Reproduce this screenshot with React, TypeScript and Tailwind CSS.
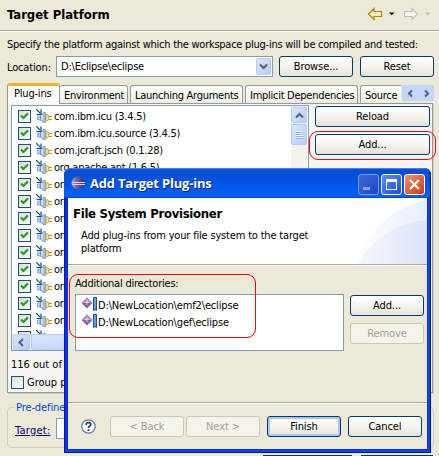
import React from "react";
import clsx from "clsx";

type ButtonProps = { label: string; className?: string; disabled?: boolean; primary?: boolean };

function Button({ label, className, disabled, primary }: ButtonProps) {
  return (
    <button
      className={clsx(
        "flex h-[21px] shrink-0 items-center justify-center rounded-[3px] border leading-[13px] tracking-[-0.1px]",
        disabled
          ? "border-[#c9c7ba] bg-[#f5f4ea] text-[#a1a192]"
          : "border-[#003c74] bg-linear-to-b from-white via-[#f5f4ef] to-[#e6e3d8] text-black",
        primary && "shadow-[inset_0_0_0_2px_#a9c4f2]",
        className,
      )}
    >
      {label}
    </button>
  );
}

function Chevron({ d, className }: { d: string; className?: string }) {
  return (
    <svg viewBox="0 0 9 9" className={clsx("size-[9px]", className)} fill="none" stroke="#4d6185" strokeWidth="2">
      <path d={d} />
    </svg>
  );
}

const blueBox = "flex shrink-0 items-center justify-center rounded-[2px] border border-[#b7cbf8] bg-linear-to-br from-[#dbe6fe] to-[#b9cdf8]";

function CheckBox({ checked }: { checked?: boolean }) {
  return (
    <span className="flex size-[13px] shrink-0 items-center justify-center border border-[#1c5180] bg-linear-to-br from-[#dcdcd7] to-white">
      {checked && (
        <svg viewBox="0 0 9 9" className="size-[9px]" fill="none" stroke="#21a121" strokeWidth="2.2">
          <path d="M1 3.5 3.4 6 8 1.4" />
        </svg>
      )}
    </span>
  );
}

function PluginIcon() {
  return (
    <svg viewBox="0 0 16 14" className="h-[14px] w-[16px] shrink-0">
      <path d="M1.5 7h3v4h-3z" fill="#b4c9ec" stroke="#7f9bcb" strokeWidth=".7" />
      <path d="M4.5 5.5 6.5 4.5 7.5 3.5h1.8v10.5H7.5L6.5 12.5 4.5 11.5z" fill="#a3bfee" stroke="#6484ba" strokeWidth=".7" />
      <path d="M6 6v5.5" stroke="#dbe8fc" strokeWidth="1.4" />
      <path d="M9.8 5.8h1.6l1.4 1v4l-1.4 1H9.8z" fill="#f8df98" stroke="#c8912c" strokeWidth=".9" />
      <path d="M13 7.5h3M13 10.5h3" stroke="#c8912c" strokeWidth="1" />
      <path d="M0 0 4 4M5 .5v5H.5" fill="none" stroke="#174a78" strokeWidth="1.2" />
    </svg>
  );
}

function Tab({ label, className }: { label: string; className?: string }) {
  return (
    <div
      className={clsx(
        "flex h-[18px] shrink-0 items-start overflow-hidden rounded-t-[3px] border border-b-0 border-[#919b9c] bg-linear-to-b from-white to-[#efede2] pt-[3px] tracking-[-0.27px] whitespace-nowrap",
        className,
      )}
    >
      {label}
    </div>
  );
}

const plugins: string[] = [
  "com.ibm.icu (3.4.5)",
  "com.ibm.icu.source (3.4.5)",
  "com.jcraft.jsch (0.1.28)",
  "org.apache.ant (1.6.5)",
  ...Array.from({ length: 10 }, () => "org"),
];

function Header() {
  return (
    <header className="flex h-[32px] shrink-0 justify-between border-b border-white shadow-[inset_0_-1px_0_#aca899]">
      <h1 className="mt-[7px] ml-[7px] text-[13px] leading-[15px] font-bold tracking-[-0.03px]">Target Platform</h1>
      <svg viewBox="0 0 66 14" className="mt-[7px] mr-[6px] h-[14px] w-[66px]">
        <path d="M1.5 7 7 1.5V4.5H14.5V9.5H7V12.5z" fill="#fdefb5" stroke="#b97e11" strokeWidth="1.2" />
        <path d="M22 5.5h5.5L24.8 8.3z" fill="#000" />
        <path d="M50.5 7 45 1.5V4.5H37.5V9.5H45V12.5z" fill="#f4f3ee" stroke="#c0bfba" strokeWidth="1.1" />
        <path d="M58 5.5h5.5L60.8 8.3z" fill="#bdbbb0" />
      </svg>
    </header>
  );
}

function PluginList() {
  return (
    <div className="flex h-[246px] w-[298px] flex-col border border-[#7f9db9] bg-white">
      <div className="flex h-[228px] overflow-hidden">
        <ul className="flex-1 pt-[2px] pl-[6px]">
          {plugins.map((name, i) => (
            <li key={i} className="flex h-[17px] items-center">
              <CheckBox checked />
              <span className="mb-px ml-[5px] flex">
                <PluginIcon />
              </span>
              <span className="ml-[2px] tracking-[-0.25px] whitespace-nowrap">{name}</span>
            </li>
          ))}
        </ul>
        <div className="mr-px flex w-[16px] flex-col gap-px bg-[#f3f2ec] pt-px">
          <div className={clsx(blueBox, "h-[16px]")}>
            <Chevron d="M1 6.5 4.5 3 8 6.5" />
          </div>
          <div className={clsx(blueBox, "h-[21px] flex-col")}>
            <i className="h-px w-[7px] bg-white" />
            <i className="h-px w-[7px] bg-[#8cb0f8]" />
            <i className="h-px w-[7px] bg-white" />
            <i className="h-px w-[7px] bg-[#8cb0f8]" />
            <i className="h-px w-[7px] bg-white" />
            <i className="h-px w-[7px] bg-[#8cb0f8]" />
            <i className="h-px w-[7px] bg-white" />
            <i className="h-px w-[7px] bg-[#8cb0f8]" />
          </div>
        </div>
      </div>
      <div className="flex h-[16px] gap-px bg-[#f3f2ec]">
        <div className={clsx(blueBox, "ml-px w-[17px]")}>
          <Chevron d="M6 1 2.5 4.5 6 8" />
        </div>
        <div className={clsx(blueBox, "w-[160px]")} />
      </div>
    </div>
  );
}

function TargetPage() {
  return (
    <main className="flex h-[456px] w-[439px] flex-col">
      <Header />
      <p className="mt-[6px] ml-[7px] h-[13px] tracking-[-0.26px] whitespace-nowrap">
        Specify the platform against which the workspace plug-ins will be compiled and tested:
      </p>
      <div className="mt-[5px] flex h-[21px] pl-[7px]">
        <label className="w-[49px] pt-[5px] tracking-[-0.15px]">Location:</label>
        <div className="flex w-[217px] items-center justify-between border border-[#7f9db9] bg-white pr-px pl-[4px]">
          <span className="tracking-[-0.22px]">D:\Eclipse\eclipse</span>
          <span className={clsx(blueBox, "h-[17px] w-[15px]")}>
            <Chevron d="M1 2.5 4.5 6 8 2.5" />
          </span>
        </div>
        <Button label="Browse..." className="ml-[6px] w-[74px]" />
        <Button label="Reset" className="ml-[7px] w-[74px]" />
      </div>
      <nav className="mt-[6px] flex h-[20px] items-end pl-[7px]">
        <div className="z-1 -mb-px h-[21px] w-[53px] shrink-0 rounded-t-[3px] border-x border-t-3 border-x-[#919b9c] border-t-[#f5b12e] bg-[#fcfcfb] pt-[1px] pl-[6px] tracking-[-0.2px]">
          Plug-ins
        </div>
        <Tab label="Environment" className="w-[68px] border-l-0 pl-[4px]" />
        <Tab label="Launching Arguments" className="ml-[2px] w-[113px] pl-[4px]" />
        <Tab label="Implicit Dependencies" className="ml-[2px] w-[113px] pl-[4px]" />
        <Tab label="Source" className="ml-[2px] w-[41px] rounded-r-none border-r-0 pl-[4px]" />
        <div className="mb-[2px] ml-px flex h-[16px] w-[32px] items-center justify-around bg-[#c6d5fb]">
          <Chevron d="M6 1.5 3 4.5 6 7.5" />
          <Chevron d="M3 1.5 6 4.5 3 7.5" />
        </div>
      </nav>
      <section className="ml-[7px] flex h-[290px] w-[426px] flex-col border border-[#919b9c] bg-[#f6f5f2] pt-px pl-[3px] shadow-[1px_1px_0_#d0cec0]">
        <div className="flex">
          <PluginList />
          <div className="flex flex-col gap-[7px] pt-px pl-[6px]">
            <Button label="Reload" className="w-[115px]" />
            <Button label="Add..." className="w-[115px]" />
          </div>
        </div>
        <p className="mt-[7px]">116 out of</p>
        <div className="mt-[5px] flex items-center gap-[3px]">
          <CheckBox />
          <span>Group plug-ins</span>
        </div>
      </section>
      <fieldset className="mt-[8px] ml-[7px] h-[47px] w-[427px] rounded-[4px] border border-[#d0d0bf] pl-[7px]">
        <legend className="px-px tracking-[-0.1px] text-[#0046d5]">Pre-defined</legend>
        <div className="mt-[4px] flex">
          <span className="w-[41px] pt-[6px] tracking-[0.25px] text-[#000080] underline">Target:</span>
          <span className="h-[21px] w-[200px] border border-[#7f9db9] bg-white" />
        </div>
      </fieldset>
      <div className="mt-[7px] flex h-px gap-[9px] pl-[263px]">
        <span className="w-[89px] bg-[#003c74]" />
        <span className="w-[72px] bg-[#003c74]" />
      </div>
    </main>
  );
}

function EclipseLogo() {
  return (
    <svg viewBox="0 0 14 14" className="size-[14px]">
      <defs>
        <linearGradient id="ball" x1="0" y1="0" x2="1" y2="0">
          <stop offset="0" stopColor="#b9a3c9" />
          <stop offset=".45" stopColor="#6a5b9c" />
          <stop offset="1" stopColor="#35307a" />
        </linearGradient>
      </defs>
      <circle cx="7" cy="7" r="6.5" fill="url(#ball)" />
      <path d="M1 6.5h13M1 8.5h13" stroke="#dcd6ec" strokeWidth="1" />
    </svg>
  );
}

const frameButton = "flex h-[21px] w-[21px] items-center justify-center rounded-[3px] border";

function DirectoryIcon() {
  return (
    <svg viewBox="0 0 16 15" className="h-[15px] w-[16px] shrink-0">
      <path d="M5 .5 10.5 6 5 11.5-.5 6z" fill="#8a63a6" />
      <path d="M5 .5 10.5 6H-.5z" fill="#b092c6" />
      <path d="M5 3v5M3 5.5h4" stroke="#e2d3ee" strokeWidth="1" />
      <path d="M11.5.5h3v13l-1.5-1-1.5 1z" fill="#5fa3dc" stroke="#1c4f8c" />
    </svg>
  );
}

function Dialog() {
  return (
    <div className="absolute top-[168px] left-[64px] flex h-[285px] w-[367px] flex-col rounded-t-[7px] bg-[#0831d9] px-[4px] pb-[4px] shadow-[inset_-1px_-1px_0_#00138c,inset_1px_0_0_#0019cf,inset_-3px_-3px_0_#0a48e8]">
      <div className="-mx-[4px] flex h-[30px] shrink-0 items-center rounded-t-[7px] bg-linear-to-b from-[#0a4bd0] via-[#0054e6] to-[#0263f8] pr-[6px] pl-[7px] shadow-[inset_0_2px_1px_-1px_#3d8df8,inset_-1px_0_0_#00138c,inset_0_-1px_0_#0348c6]">
        <EclipseLogo />
        <span className="ml-[5px] flex-1 font-['Open_Sans',sans-serif] text-[13px] leading-[18px] font-bold tracking-[-0.2px] whitespace-nowrap text-white [font-stretch:normal] [text-shadow:1px_1px_0_#0a1f80]">
          Add Target Plug-ins
        </span>
        <div className="mt-[3px] flex gap-[2px]">
          <span className={clsx(frameButton, "border-[#7f97e8] bg-linear-to-br from-[#3f68dd] to-[#1c48c6]")}>
            <i className="mt-[8px] mr-[4px] h-[3px] w-[7px] bg-[#8fa0e6]" />
          </span>
          <span className={clsx(frameButton, "border-white bg-linear-to-br from-[#5b8af5] to-[#1c50dc]")}>
            <i className="h-[11px] w-[11px] border border-t-3 border-white" />
          </span>
          <span className={clsx(frameButton, "border-white bg-linear-to-br from-[#f0906f] to-[#cc3411]")}>
            <svg viewBox="0 0 11 11" className="size-[11px]" stroke="#fff" strokeWidth="2.2">
              <path d="M1 1 10 10M10 1 1 10" />
            </svg>
          </span>
        </div>
      </div>
      <div className="relative h-[67px] shrink-0 overflow-hidden border-b border-[#aca899] bg-white pt-[8px] pl-[5px]">
        <svg viewBox="0 0 80 66" className="absolute top-0 right-0 h-[66px] w-[80px]">
          <defs>
            <linearGradient id="outer" x1="0" y1="0" x2="1" y2="0">
              <stop offset="0" stopColor="#fff" />
              <stop offset="1" stopColor="#e8eefa" />
            </linearGradient>
            <linearGradient id="inner" x1="0" y1="0" x2="1" y2="0">
              <stop offset="0" stopColor="#f6f8fd" />
              <stop offset="1" stopColor="#dbe4f7" />
            </linearGradient>
          </defs>
          <path d="M8 66C20 35 45 8 80 2V66z" fill="url(#outer)" />
          <path d="M10 66C25 42 50 24 80 22V66z" fill="url(#inner)" />
        </svg>
        <h2 className="relative text-[13px] leading-[15px] font-bold tracking-[-0.3px]">File System Provisioner</h2>
        <p className="relative mt-[8px] ml-[8px] w-[250px] tracking-[-0.18px]">
          Add plug-ins from your file system to the target
          <br />
          platform
        </p>
      </div>
      <div className="flex flex-1 flex-col border-t border-white bg-[#ece9d8]">
        <p className="mt-[11px] ml-[7px] tracking-[-0.22px]">Additional directories:</p>
        <div className="mt-[4px] flex pl-[7px]">
          <ul className="h-[57px] w-[269px] border border-[#7f9db9] bg-white pt-[2px] pl-[6px] tracking-[-0.15px]">
            {["D:\\NewLocation\\emf2\\eclipse", "D:\\NewLocation\\gef\\eclipse"].map((dir) => (
              <li key={dir} className="flex h-[17px]">
                <DirectoryIcon />
                <span className="pt-[2px]">{dir}</span>
              </li>
            ))}
          </ul>
          <div className="ml-[6px] flex flex-col gap-[7px] pt-px">
            <Button label="Add..." className="w-[74px]" />
            <Button label="Remove" disabled className="w-[74px]" />
          </div>
        </div>
        <div className="mt-auto flex h-[47px] border-t border-[#aca899] pt-[13px] pl-[13px] shadow-[inset_0_1px_0_#fff]">
          <svg viewBox="0 0 15 15" className="mt-[3px] size-[15px]">
            <circle cx="7.5" cy="7.5" r="6.7" fill="#fbfcff" stroke="#65779f" strokeWidth="1.2" />
            <path d="M5.2 6V5.2C5.2 3 9.8 3 9.8 5.4 9.8 7 7.5 7 7.5 9" fill="none" stroke="#2b3f6b" strokeWidth="1.7" />
            <path d="M6.6 10.2h1.8v1.8H6.6z" fill="#2b3f6b" />
          </svg>
          <Button label="< Back" disabled className="ml-[14px] w-[74px]" />
          <Button label="Next >" disabled className="ml-[2px] w-[74px]" />
          <Button label="Finish" primary className="ml-[7px] w-[74px]" />
          <Button label="Cancel" className="ml-[7px] w-[74px]" />
        </div>
      </div>
    </div>
  );
}

export default function App() {
  return (
    <div className="relative h-[456px] w-[439px] overflow-hidden bg-[#ece9d8] font-['DejaVu_Sans_Condensed','DejaVu_Sans',sans-serif] text-[11px] leading-[13px] text-black [font-stretch:condensed]">
      <TargetPage />
      <Dialog />
      <div className="absolute top-[131px] left-[309px] h-[29px] w-[127px] rounded-[9px] border border-[#f00]" />
      <div className="absolute top-[274px] left-[69px] h-[64px] w-[187px] rounded-[9px] border border-[#f00]" />
    </div>
  );
}
